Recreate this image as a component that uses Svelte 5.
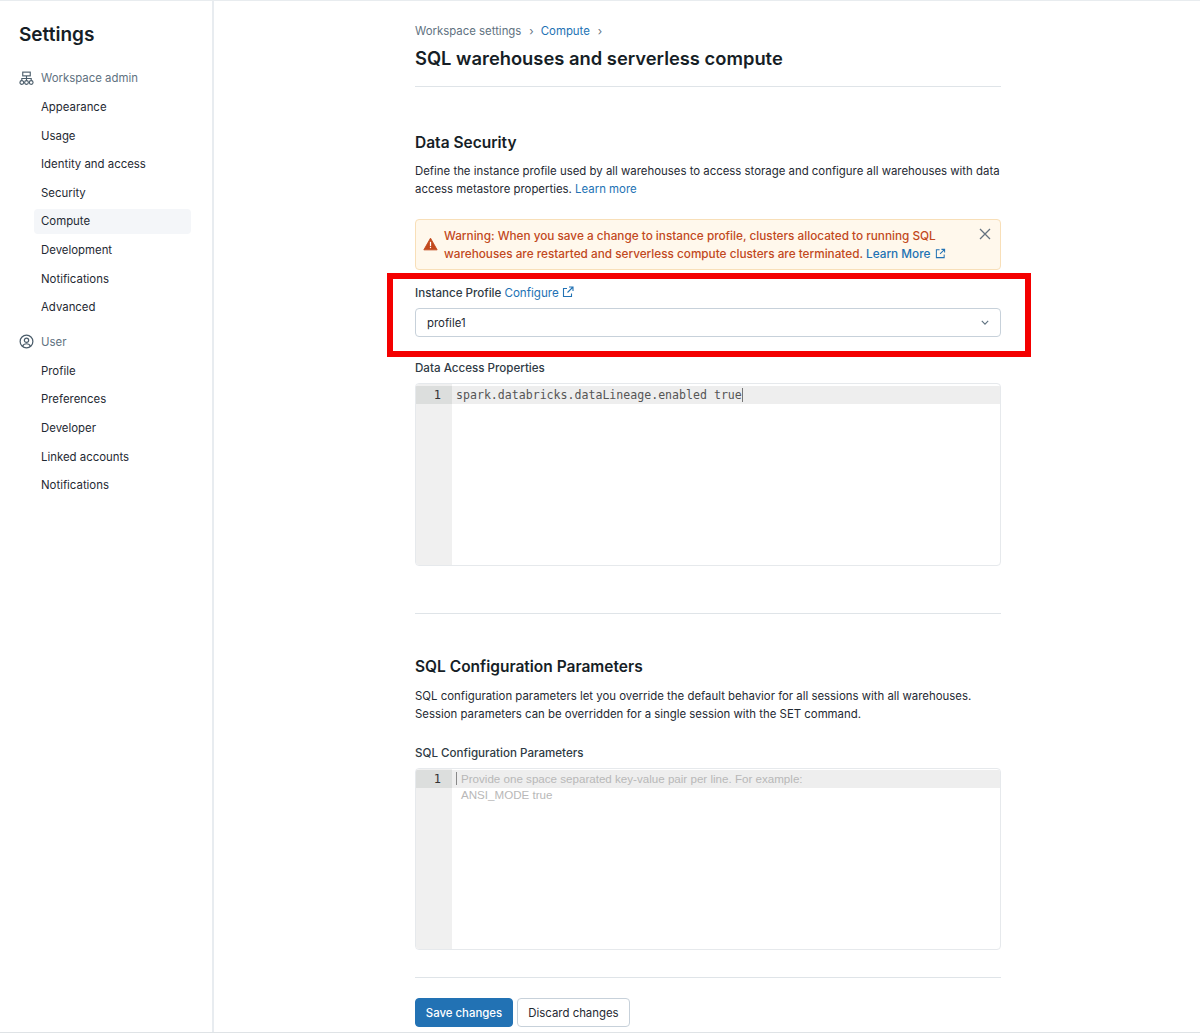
<script>
  const admin = ['Appearance','Usage','Identity and access','Security','Compute','Development','Notifications','Advanced'];
  const user = ['Profile','Preferences','Developer','Linked accounts','Notifications'];
</script>

<div class="page">
  <aside class="sidebar">
    <h1>Settings</h1>
    <div class="group">
      <svg class="gicon" viewBox="0 0 16 16" fill="none" stroke="currentColor" stroke-width="1.2"><rect x="4" y="1.2" width="8" height="4"/><path d="M8 5.2v3M3 10V8h10v2M8 8v2"/><circle cx="3" cy="12.3" r="2"/><circle cx="8" cy="12.3" r="2"/><circle cx="13" cy="12.3" r="2"/></svg>
      <span>Workspace admin</span>
    </div>
    {#each admin as item}
      <div class="item" class:active={item === 'Compute'}>{item}</div>
    {/each}
    <div class="group user">
      <svg class="gicon" viewBox="0 0 16 16" fill="none" stroke="currentColor" stroke-width="1.3"><circle cx="8" cy="8" r="6.8"/><circle cx="8" cy="6.6" r="2.3"/><path d="M3.8 13c.8-1.8 2.3-2.6 4.2-2.6s3.400.8 4.200 2.600"/></svg>
      <span>User</span>
    </div>
    {#each user as item}
      <div class="item">{item}</div>
    {/each}
  </aside>

  <main class="main">
    <div class="crumbs">
      <span class="muted">Workspace settings</span><span class="sep">›</span><a href="#c">Compute</a><span class="sep">›</span>
    </div>
    <h2>SQL warehouses and serverless compute</h2>
    <hr class="hr-top" />

    <h3 class="security">Data Security</h3>
    <p class="desc">Define the instance profile used by all warehouses to access storage and configure all warehouses with data access metastore properties. <a href="#l">Learn more</a></p>

    <div class="alert">
      <svg class="warn" viewBox="0 0 16 16"><path d="M8 1.300 15.600 14.700H.4z" fill="#c2491d" stroke="#c2491d" stroke-linejoin="round"/><rect x="7.300" y="5.500" width="1.400" height="4.800" fill="#fff"/><rect x="7.300" y="11.200" width="1.400" height="1.500" fill="#fff"/></svg>
      <div class="alert-text">Warning: When you save a change to instance profile, clusters allocated to running SQL warehouses are restarted and serverless compute clusters are terminated. <a href="#m">Learn More <svg class="ext small" viewBox="0 0 12 12" fill="none" stroke="currentColor" stroke-width="1.100"><path d="M5 2H1.500v8.500H10V7M7 1.500h3.500V5M10.500 1.500 5.500 6.500"/></svg></a></div>
      <svg class="close" viewBox="0 0 12 12" fill="none" stroke="#64727f" stroke-width="1.300"><path d="M1 1l10 10M11 1 1 11"/></svg>
    </div>

    <div class="label first">Instance Profile <a href="#c">Configure <svg class="ext" viewBox="0 0 12 12" fill="none" stroke="currentColor" stroke-width="1.100"><path d="M5 2.500H1.500v8H9.500V7.500M7 1h4v4M11 1 5.500 6.500"/></svg></a></div>
    <div class="select">
      <span>profile1</span>
      <svg viewBox="0 0 10 6" fill="none" stroke="#5f7281" stroke-width="1.400"><path d="M1 1l4 4 4-4"/></svg>
    </div>

    <div class="label second">Data Access Properties</div>
    <div class="editor tall">
      <div class="gutter"><div class="num">1</div></div>
      <div class="code">
        <div class="line mono"><span class="typed">spark.databricks.dataLineage.enabled true</span></div>
      </div>
    </div>

    <hr class="hr-mid" />

    <h3 class="sqlhead">SQL Configuration Parameters</h3>
    <p class="desc sqldesc">SQL configuration parameters let you override the default behavior for all sessions with all warehouses. Session parameters can be overridden for a single session with the SET command.</p>

    <div class="label third">SQL Configuration Parameters</div>
    <div class="editor short">
      <div class="gutter"><div class="num">1</div></div>
      <div class="code">
        <div class="line ph"><span class="cursor">Provide one space separated key-value pair per line. For example:</span></div>
        <div class="ph second-line">ANSI_MODE true</div>
      </div>
    </div>

    <hr class="hr-bottom" />

    <div class="actions">
      <button class="primary">Save changes</button>
      <button class="secondary">Discard changes</button>
    </div>
  </main>

  <div class="highlight"></div>
</div>

<style>
  :global(body) { margin: 0; background: #fff; }
  .page {
    position: relative;
    display: flex;
    width: 1200px;
    height: 1033px;
    box-sizing: border-box;
    overflow: hidden;
    border-top: 1px solid #e8ecef;
    border-bottom: 1px solid #dfe3e6;
    font-family: Inter, "Liberation Sans", sans-serif;
    font-size: 11.400px;
    color: #1f2a33;
  }
  a { color: #2272b4; text-decoration: none; }
  .sidebar {
    width: 214px;
    flex: none;
    box-sizing: border-box;
    border-right: 2px solid #e8ecf0;
    padding: 20px 21px 0 19px;
  }
  h1 { margin: 0 0 15px; font-size: 19px; line-height: 28px; font-weight: 600; color: #161e26; }
  .group { display: flex; align-items: center; gap: 7px; height: 28px; margin-bottom: -1px; color: #5f7281; }
  .group.user { margin-top: 8px; }
  .gicon { width: 15px; height: 15px; color: #4a5c6a; flex: none; }
  .item { height: 24.600px; margin: 4px 0 4px 15px; padding-left: 7px; line-height: 24.600px; border-radius: 4px; }
  .item.active { background: #f4f6f9; }

  .main { width: 586px; flex: none; margin-left: 201px; }
  .crumbs { display: flex; align-items: center; height: 18px; margin-top: 21px; color: #5f7281; }
  .crumbs .sep { margin: 0 7px 0 8px; }
  h2 { margin: 5px 0 0; font-size: 18.350px; line-height: 26px; font-weight: 600; color: #161e26; }
  hr { border: 0; height: 1px; margin: 0; background: #dfe4e8; }
  .hr-top { margin-top: 15px; }
  h3 { margin: 0; font-size: 15.500px; line-height: 22px; font-weight: 600; color: #161e26; }
  .security { margin-top: 45px; }
  .desc { margin: 8px 0 0; line-height: 18px; font-size: 11.400px; }
  .alert {
    display: flex;
    box-sizing: border-box;
    height: 51px;
    margin-top: 21px;
    padding: 7px 9px 0 7px;
    background: #fff8ec;
    border: 1px solid #f8dfb8;
    border-radius: 4px;
  }
  .warn { width: 15px; height: 14px; margin-top: 10px; flex: none; }
  .alert-text { flex: 1; margin-left: 6px; line-height: 18px; color: #c2491d; font-weight: 500; font-size: 11.780px; }
  .close { width: 12px; height: 12px; margin-top: 1px; flex: none; }
  .ext { width: 12px; height: 12px; vertical-align: -1px; }
  .ext.small { width: 11px; height: 11px; margin-left: 1px; }
  .label { line-height: 18px; font-weight: 500; font-size: 11.600px; color: #2f3b45; }
  .label.first { margin-top: 14px; }
  .label.first a { font-weight: 400; }
  .label.second { margin-top: 22px; }
  .label.third { margin-top: 21px; }
  .select {
    display: flex;
    align-items: center;
    justify-content: space-between;
    box-sizing: border-box;
    height: 29px;
    margin-top: 6px;
    padding: 0 11px;
    border: 1px solid #c7d1da;
    border-radius: 4px;
  }
  .select svg { width: 8px; height: 5px; }
  .editor {
    display: flex;
    box-sizing: border-box;
    margin-top: 6px;
    border: 1px solid #e6e9ec;
    border-radius: 4px;
    overflow: hidden;
  }
  .tall { height: 183px; }
  .short { height: 182px; }
  .gutter { width: 36px; flex: none; background: #f0f0f0; padding-top: 2px; }
  .short .gutter, .short .code { padding-top: 1px; }
  .num { height: 18px; line-height: 18px; background: #dcdedd; text-align: right; padding-right: 11px; font-family: "DejaVu Sans Mono", monospace; font-size: 12px; color: #333; }
  .code { flex: 1; padding-top: 2px; min-width: 0; }
  .line { height: 18px; line-height: 18px; background: #eeeeee; white-space: nowrap; }
  .mono { padding-left: 4px; font-family: "DejaVu Sans Mono", monospace; font-size: 11.580px; color: #555; }
  .typed { border-right: 1px solid #777; }
  .ph { font-family: "Liberation Sans", sans-serif; font-size: 11.600px; color: #b8b8b8; padding-left: 4px; }
  .cursor { border-left: 1px solid #888; padding-left: 4px; }
  .second-line { height: 14px; line-height: 14px; padding-left: 9px; }
  .hr-mid { margin-top: 47px; }
  .sqlhead { margin-top: 42px; }
  .sqldesc { margin-top: 9px; }
  .hr-bottom { margin-top: 27px; }
  .actions { display: flex; gap: 4px; margin-top: 20px; }
  button { height: 29px; box-sizing: border-box; border-radius: 4px; font: 500 11.400px Inter, "Liberation Sans", sans-serif; padding: 0; white-space: nowrap; }
  .primary { width: 98px; background: #2272b4; border: 1px solid #2272b4; color: #fff; }
  .secondary { width: 113px; background: #fff; border: 1px solid #c7d1da; color: #1f2a33; font-weight: 400; }
  .highlight {
    position: absolute;
    left: 387px;
    top: 272px;
    width: 644px;
    height: 84px;
    box-sizing: border-box;
    border: 6px solid #f40000;
    pointer-events: none;
  }
</style>
